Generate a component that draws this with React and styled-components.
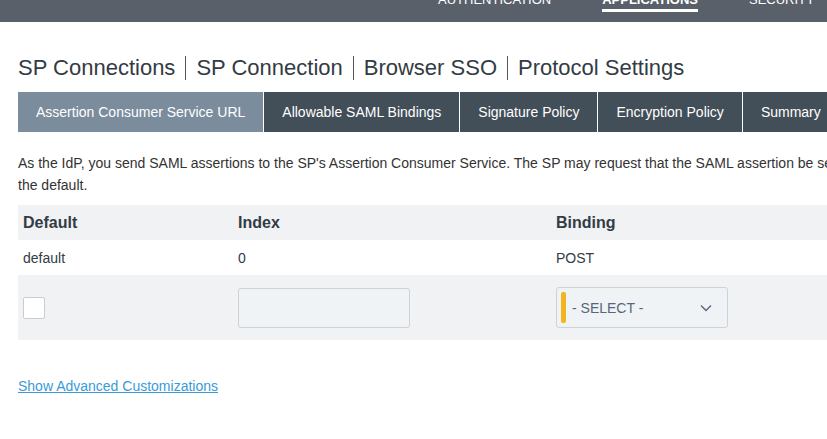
import React from "react";
import styled, { createGlobalStyle } from "styled-components";

const GlobalStyle = createGlobalStyle`
  body {
    margin: 0;
    overflow: hidden;
    background: #fff;
    font-family: "Liberation Sans", Arial, sans-serif;
    color: #333;
  }
`;

const Page = styled.div`
  width: 1100px;
`;

const TopBar = styled.div`
  height: 22px;
  background-color: #59606a;
  overflow: hidden;
`;

const Nav = styled.div`
  display: flex;
  gap: 51px;
  padding-left: 438px;
  margin-top: -8px;
`;

const NavItem = styled.a`
  font-size: 13px;
  line-height: 16px;
  color: #fff;
  text-transform: uppercase;
  font-weight: ${(p) => (p.active ? 700 : 400)};
  padding-bottom: 1px;
  border-bottom: 3px solid ${(p) => (p.active ? "#fff" : "transparent")};
`;

const Content = styled.div`
  padding: 0 18px;
`;

const Breadcrumb = styled.h1`
  display: flex;
  align-items: center;
  margin: 34px 0 0;
  font-size: 22px;
  font-weight: 400;
  color: #333b44;
  line-height: 26px;
`;

const Crumb = styled.span`
  padding: 0 10px;
  border-left: 1px solid #555;
  line-height: 24px;

  &:first-child {
    padding-left: 0;
    border-left: none;
  }
`;

const Tabs = styled.div`
  display: flex;
  margin-top: 12px;
`;

const Tab = styled.div`
  height: 40px;
  display: flex;
  align-items: center;
  padding: 0 18px;
  font-size: 14px;
  color: #fff;
  background-color: ${(p) => (p.active ? "#7b8c9d" : "#424e58")};
  border-left: 1px solid #fff;

  &:first-child {
    border-left: none;
  }
`;

const Description = styled.p`
  margin: 20px 0 0;
  font-size: 14px;
  line-height: 22px;
  color: #333;
`;

const Line = styled.span`
  white-space: nowrap;
`;

const Table = styled.div`
  margin-top: 9px;
`;

const Row = styled.div`
  display: grid;
  grid-template-columns: 215px 318px 1fr;
  align-items: center;
  height: ${(p) => p.h}px;
  background-color: ${(p) => (p.shaded ? "#f0f2f4" : "#fff")};
`;

const HeadCell = styled.div`
  padding-left: 5px;
  font-size: 16px;
  font-weight: 700;
  color: #333b44;
`;

const Cell = styled.div`
  padding-left: 5px;
  font-size: 14px;
  color: #333b44;
`;

const Checkbox = styled.div`
  width: 20px;
  height: 20px;
  background: #fff;
  border: 1px solid #c9cdd1;
  border-radius: 2px;
`;

const TextInput = styled.input`
  box-sizing: border-box;
  width: 172px;
  height: 40px;
  background: #eff3f6;
  border: 1px solid #cdd2d6;
  border-radius: 3px;
  outline: none;
`;

const Select = styled.div`
  box-sizing: border-box;
  width: 172px;
  height: 41px;
  display: flex;
  align-items: center;
  padding: 4px 15px 4px 4px;
  background: #eff3f6;
  border: 1px solid #cdd2d6;
  border-radius: 3px;
`;

const RequiredBar = styled.div`
  width: 5px;
  align-self: stretch;
  background: #f2b51d;
  border-radius: 2px;
`;

const SelectText = styled.span`
  flex: 1;
  margin-left: 6px;
  font-size: 14px;
  color: #56677a;
`;

const AdvancedLink = styled.a`
  display: inline-block;
  margin-top: 38px;
  font-size: 14px;
  color: #3a9bd7;
  text-decoration: underline;
`;

function Chevron() {
  return (
    <svg width="12" height="8" viewBox="0 0 12 8">
      <path d="M1 1.5 L6 6.5 L11 1.5" fill="none" stroke="#56677a" strokeWidth="1.4" />
    </svg>
  );
}

export default function App() {
  return (
    <Page>
      <GlobalStyle />
      <TopBar>
        <Nav>
          <NavItem>Authentication</NavItem>
          <NavItem active>Applications</NavItem>
          <NavItem>Security</NavItem>
        </Nav>
      </TopBar>
      <Content>
        <Breadcrumb>
          <Crumb>SP Connections</Crumb>
          <Crumb>SP Connection</Crumb>
          <Crumb>Browser SSO</Crumb>
          <Crumb>Protocol Settings</Crumb>
        </Breadcrumb>
        <Tabs>
          <Tab active>Assertion Consumer Service URL</Tab>
          <Tab>Allowable SAML Bindings</Tab>
          <Tab>Signature Policy</Tab>
          <Tab>Encryption Policy</Tab>
          <Tab>Summary</Tab>
        </Tabs>
        <Description>
          <Line>
            As the IdP, you send SAML assertions to the SP's Assertion Consumer Service. The SP may request that the SAML
            assertion be sent to one of several URLs, via different bindings. Please select one to be
          </Line>
          <br />
          the default.
        </Description>
        <Table>
          <Row h={35} shaded>
            <HeadCell>Default</HeadCell>
            <HeadCell>Index</HeadCell>
            <HeadCell>Binding</HeadCell>
          </Row>
          <Row h={35}>
            <Cell>default</Cell>
            <Cell>0</Cell>
            <Cell>POST</Cell>
          </Row>
          <Row h={65} shaded>
            <Cell>
              <Checkbox />
            </Cell>
            <Cell>
              <TextInput type="text" />
            </Cell>
            <Cell>
              <Select>
                <RequiredBar />
                <SelectText>- SELECT -</SelectText>
                <Chevron />
              </Select>
            </Cell>
          </Row>
        </Table>
        <AdvancedLink href="#">Show Advanced Customizations</AdvancedLink>
      </Content>
    </Page>
  );
}
